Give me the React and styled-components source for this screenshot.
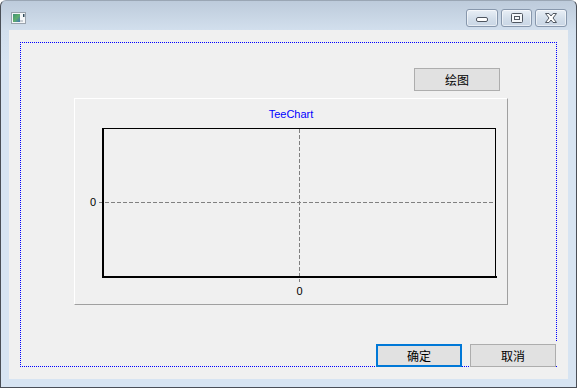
import React from "react";
import styled, { createGlobalStyle } from "styled-components";

const Global = createGlobalStyle`
  html, body { margin: 0; padding: 0; background: #ffffff; }
  body { font-family: "Liberation Sans", Arial, sans-serif; }
  * { box-sizing: border-box; }
`;

const Window = styled.div`
  width: 577px;
  height: 388px;
  border: 1px solid #4a4f57;
  border-top-color: #9aa6b4;
  border-radius: 6px 6px 0 0;
  background: linear-gradient(#bdcbdb 0px, #d2dfed 29px, #d7e4f2 60px, #d7e4f2 100%);
  display: flex;
  flex-direction: column;
  overflow: hidden;
`;

const TitleBar = styled.div`
  height: 29px;
  flex: none;
  display: flex;
  align-items: flex-start;
  padding: 10px 9px 0 10px;
`;

const Spacer = styled.div`
  flex: 1;
`;

const CaptionGroup = styled.div`
  display: flex;
  gap: 3px;
  margin-top: -2px;
`;

const CaptionButton = styled.div`
  width: ${(p) => p.$w || 31}px;
  height: 18px;
  border: 1px solid #8797ac;
  border-radius: 3px;
  background: linear-gradient(#e9eff6, #d3deea 55%, #c9d6e5);
  box-shadow: inset 0 0 0 1px rgba(255, 255, 255, 0.55);
  display: flex;
  align-items: center;
  justify-content: center;
`;

const Frame = styled.div`
  flex: 1;
  padding: 0 8px 8px 8px;
  display: flex;
`;

const Client = styled.div`
  flex: 1;
  position: relative;
  background: #f0f0f0;
  padding: 12px 11px 0 11px;
`;

const hDots = "repeating-linear-gradient(to right, #0000ff 0px, #0000ff 1px, #f0f0f0 1px, #f0f0f0 2px)";
const vDots = "repeating-linear-gradient(to bottom, #0000ff 0px, #0000ff 1px, #f0f0f0 1px, #f0f0f0 2px)";

const FocusBox = styled.div`
  width: 537px;
  height: 325px;
  padding: 26px 1px 1px 1px;
  background:
    ${hDots} left top / 100% 1px no-repeat,
    ${hDots} left bottom / 100% 1px no-repeat,
    ${vDots} left top / 1px 100% no-repeat,
    ${vDots} right top / 1px calc(100% - 25px) no-repeat,
    #f0f0f0;
`;

const TopRow = styled.div`
  display: flex;
  justify-content: flex-end;
  padding-right: 56px;
`;

const Button = styled.div`
  width: 86px;
  height: 23px;
  background: #e1e1e1;
  border: ${(p) => (p.$default ? "2px solid #0078d7" : "1px solid #adadad")};
  display: flex;
  align-items: center;
  justify-content: center;
  font-family: "Noto Sans CJK SC", "Liberation Sans", sans-serif;
  font-size: 12px;
  color: #000;
  line-height: 1;
`;

const ChartPanel = styled.div`
  width: 434px;
  height: 207px;
  margin: 7px 0 0 53px;
  border: 1px solid;
  border-color: #ffffff #a0a0a0 #a0a0a0 #ffffff;
  background: #f0f0f0;
`;

const BottomButtons = styled.div`
  position: absolute;
  right: 12px;
  bottom: 12px;
  display: flex;
  gap: 8px;
`;

function AppIcon() {
  return (
    <svg width="16" height="14" viewBox="0 0 16 14">
      <defs>
        <linearGradient id="ig" x1="0" y1="0" x2="1" y2="1">
          <stop offset="0" stopColor="#3f8f7a" />
          <stop offset="0.5" stopColor="#5fae6a" />
          <stop offset="1" stopColor="#3f72b8" />
        </linearGradient>
      </defs>
      <rect x="0.5" y="1.5" width="14" height="11" fill="#f4f6f8" stroke="#9aa3ad" />
      <rect x="2" y="3" width="7" height="8" fill="url(#ig)" />
      <rect x="9" y="9" width="3" height="2" fill="#c9ced4" />
      <rect x="12" y="3" width="1.5" height="3" fill="#2f4a5a" />
    </svg>
  );
}

function MinGlyph() {
  return (
    <svg width="12" height="12" viewBox="0 0 12 12">
      <rect x="0.5" y="5.5" width="11" height="4" rx="1.5" fill="#ffffff" stroke="#4f5660" />
    </svg>
  );
}

function MaxGlyph() {
  return (
    <svg width="12" height="12" viewBox="0 0 12 12">
      <rect x="0.5" y="1.5" width="11" height="9" rx="1" fill="#f4f7fa" stroke="#4f5660" />
      <rect x="3.5" y="4.5" width="5" height="3" fill="none" stroke="#4f5660" />
    </svg>
  );
}

function CloseGlyph() {
  return (
    <svg width="14" height="12" viewBox="0 0 14 12">
      <path
        d="M1.5 1.5 H5 L7 4 L9 1.5 H12.5 L9 6 L12.5 10.5 H9 L7 8 L5 10.5 H1.5 L5 6 Z"
        fill="#ffffff"
        stroke="#4f5660"
        strokeWidth="1"
        strokeLinejoin="round"
      />
    </svg>
  );
}

function Chart() {
  const font = '"Liberation Sans", Arial, sans-serif';
  return (
    <svg width="432" height="205" viewBox="0 0 432 205" style={{ display: "block" }}>
      <text x="216" y="19" textAnchor="middle" fill="#0000ff" fontFamily={font} fontSize="11">
        TeeChart
      </text>
      <line x1="224.5" x2="224.5" y1="30" y2="183" stroke="#808080" strokeDasharray="4 2" />
      <line x1="24" x2="420" y1="103.5" y2="103.5" stroke="#808080" strokeDasharray="4 2" />
      <line x1="27" x2="421" y1="29.5" y2="29.5" stroke="#000" />
      <line x1="420.5" x2="420.5" y1="29" y2="179" stroke="#000" />
      <rect x="27" y="29" width="2" height="150" fill="#000" />
      <rect x="27" y="177" width="395" height="2" fill="#000" />
      <text x="21" y="107" textAnchor="end" fill="#000" fontFamily={font} fontSize="11">
        0
      </text>
      <text x="224.5" y="196" textAnchor="middle" fill="#000" fontFamily={font} fontSize="11">
        0
      </text>
    </svg>
  );
}

export default function App() {
  return (
    <>
      <Global />
      <Window>
        <TitleBar>
          <AppIcon />
          <Spacer />
          <CaptionGroup>
            <CaptionButton $w={32}>
              <MinGlyph />
            </CaptionButton>
            <CaptionButton $w={31}>
              <MaxGlyph />
            </CaptionButton>
            <CaptionButton $w={32}>
              <CloseGlyph />
            </CaptionButton>
          </CaptionGroup>
        </TitleBar>
        <Frame>
          <Client>
            <FocusBox>
              <TopRow>
                <Button>绘图</Button>
              </TopRow>
              <ChartPanel>
                <Chart />
              </ChartPanel>
            </FocusBox>
            <BottomButtons>
              <Button $default>确定</Button>
              <Button>取消</Button>
            </BottomButtons>
          </Client>
        </Frame>
      </Window>
    </>
  );
}
